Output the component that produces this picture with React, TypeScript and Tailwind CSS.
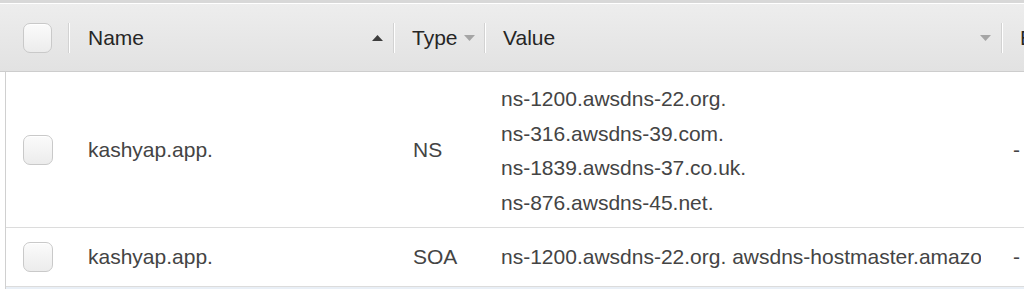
import React from 'react';

const FONT = "font-['Liberation_Sans','Helvetica_Neue',Arial,sans-serif]";

function Checkbox() {
  return (
    <div className="w-[30px] h-[30px] rounded-[7px] border border-[#c9c9c9] bg-gradient-to-b from-[#fbfbfb] to-[#ececec] shadow-[inset_0_1px_0_#fff]" />
  );
}

function Sep() {
  return <div className="w-[2px] h-[30px] border-l border-[#d2d2d2] border-r border-r-white" />;
}

function Arrow({ up, dark }: { up?: boolean; dark?: boolean }) {
  return (
    <svg width="11" height="6" viewBox="0 0 11 6" className="shrink-0">
      {up ? (
        <polygon points="0,6 11,6 5.5,0" fill={dark ? '#3d3d3d' : '#9a9a9a'} />
      ) : (
        <polygon points="0,0 11,0 5.5,6" fill={dark ? '#3d3d3d' : '#a5a5a5'} />
      )}
    </svg>
  );
}

const ROWS = [
  {
    name: 'kashyap.app.',
    type: 'NS',
    values: ['ns-1200.awsdns-22.org.', 'ns-316.awsdns-39.com.', 'ns-1839.awsdns-37.co.uk.', 'ns-876.awsdns-45.net.'],
    h: 'h-[156px]',
  },
  {
    name: 'kashyap.app.',
    type: 'SOA',
    values: ['ns-1200.awsdns-22.org. awsdns-hostmaster.amazon.com. 1 7200 900 1209600 86400'],
    h: 'h-[59px]',
  },
];

export default function App() {
  return (
    <div className={`w-[1024px] h-[289px] overflow-hidden bg-white ${FONT} text-[21px]`}>
      <div className="h-[3px] bg-[#d8d8d8]" />
      {/* header */}
      <div className="h-[69px] flex items-center border-t border-white border-b border-b-[#cdcdcd] bg-gradient-to-b from-[#ededed] to-[#e2e2e2] text-[#262626]">
        <div className="w-[70px] shrink-0 flex items-center pl-[23px] h-full">
          <Checkbox />
          <div className="ml-[16px]"><Sep /></div>
        </div>
        <div className="w-[323px] shrink-0 flex items-center justify-between pl-[18px] pr-[10px]">
          <span>Name</span>
          <Arrow up dark />
        </div>
        <Sep />
        <div className="w-[89px] shrink-0 flex items-center pl-[17px]">
          <span>Type</span>
          <span className="ml-[6px] mt-[1px]"><Arrow /></span>
        </div>
        <Sep />
        <div className="w-[515px] shrink-0 flex items-center justify-between pl-[17px] pr-[10px]">
          <span>Value</span>
          <Arrow />
        </div>
        <Sep />
        <div className="pl-[17px]">E</div>
      </div>
      {/* body */}
      <div className="ml-[5px] border-l border-[#d0d0d0] text-[#444]">
        {ROWS.map((r, i) => (
          <div key={i} className={`${r.h} flex items-center border-b border-[#dcdcdc]`}>
            <div className="w-[64px] shrink-0 pl-[17px] flex items-center">
              <Checkbox />
            </div>
            <div className="w-[324px] shrink-0 pl-[18px]">{r.name}</div>
            <div className="w-[107px] shrink-0 pl-[19px]">{r.type}</div>
            <div className={`w-[480px] shrink-0 overflow-hidden whitespace-nowrap leading-[34.5px] ${i === 0 ? 'mt-[3px]' : ''}`}>
              {r.values.map((v) => (
                <div key={v}>{v}</div>
              ))}
            </div>
            <div className="pl-[32px]">-</div>
          </div>
        ))}
        <div className="h-[2px] bg-[#e9eff6]" />
      </div>
    </div>
  );
}
